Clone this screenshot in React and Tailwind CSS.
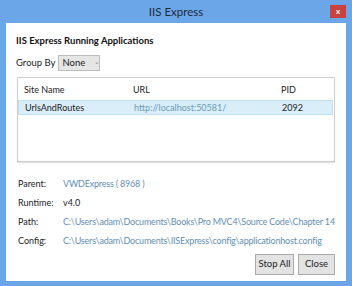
import React from 'react';

const details = [
  { label: 'Parent:', value: 'VWDExpress ( 8968 )', link: true },
  { label: 'Runtime:', value: 'v4.0', link: false },
  { label: 'Path:', value: 'C:\\Users\\adam\\Documents\\Books\\Pro MVC4\\Source Code\\Chapter 14', link: true },
  { label: 'Config:', value: 'C:\\Users\\adam\\Documents\\IISExpress\\config\\applicationhost.config', link: true },
];

const App = () => {
  return (
    <div className="w-[352px] h-[286px] bg-[#6ba6e9] flex flex-col px-[6px] pb-[5px] font-['Lato',sans-serif] text-[#222]">
      {/* title bar */}
      <div className="h-[23px] flex items-center relative shrink-0">
        <div className="flex-1 text-center text-[11.5px] text-[#1d2a3a] pl-[16px]">IIS Express</div>
        <div className="w-[16px] h-[13px] bg-[#c9423f] flex items-center justify-center text-white text-[8px] font-bold -mt-[1px]">x</div>
      </div>

      <div className="flex-1 bg-white flex flex-col pl-[10px] pr-[11px] pt-[12px]">
        <div className="text-[9.5px] font-bold leading-[12px] text-[#111]">IIS Express Running Applications</div>

        <div className="flex items-center mt-[8px] text-[9.5px]">
          <span>Group By</span>
          <div className="ml-[2px] h-[16px] w-[42px] bg-[#e6e6e6] border border-[#bdbdbd] flex items-center pl-[4px] gap-[9px]">
            <span>None</span>
            <span className="text-[7px] text-[#888] -mt-[4px]">⌄</span>
          </div>
        </div>

        {/* sites list */}
        <div className="mt-[6px] ml-[1px] h-[85px] border border-[#cfcfcf] shadow-[0_1px_1px_rgba(0,0,0,0.12)] text-[9px] pt-[3px]">
          <div className="flex h-[18px] items-center px-[6px]">
            <span className="w-[109px]">Site Name</span>
            <span className="w-[148px]">URL</span>
            <span>PID</span>
          </div>
          <div className="flex h-[15px] items-center px-[6px] bg-[#d9eef9] border border-[#bfe0f2] mr-[1px] mt-[1px]">
            <span className="w-[109px]">UrlsAndRoutes</span>
            <span className="w-[148px] text-[#6b9ab5]">http://localhost:50581/</span>
            <span>2092</span>
          </div>
        </div>

        {/* details */}
        <div className="mt-[15px] flex flex-col gap-[5px] text-[9px] pl-[2px]">
          {details.map(d => (
            <div key={d.label} className="flex h-[14px] items-center whitespace-nowrap">
              <span className="w-[45px] shrink-0">{d.label}</span>
              <span className={d.link ? 'text-[#5f8fb5] tracking-[-0.2px]' : ''}>{d.value}</span>
            </div>
          ))}
        </div>

        <div className="flex justify-end gap-[4px] mt-[6px]">
          <button className="w-[39px] h-[21px] bg-[#e3e3e3] border border-[#aaa] text-[9.5px]">Stop All</button>
          <button className="w-[37px] h-[21px] bg-[#e3e3e3] border border-[#aaa] text-[9.5px]">Close</button>
        </div>
      </div>
    </div>
  );
};

export default App;
